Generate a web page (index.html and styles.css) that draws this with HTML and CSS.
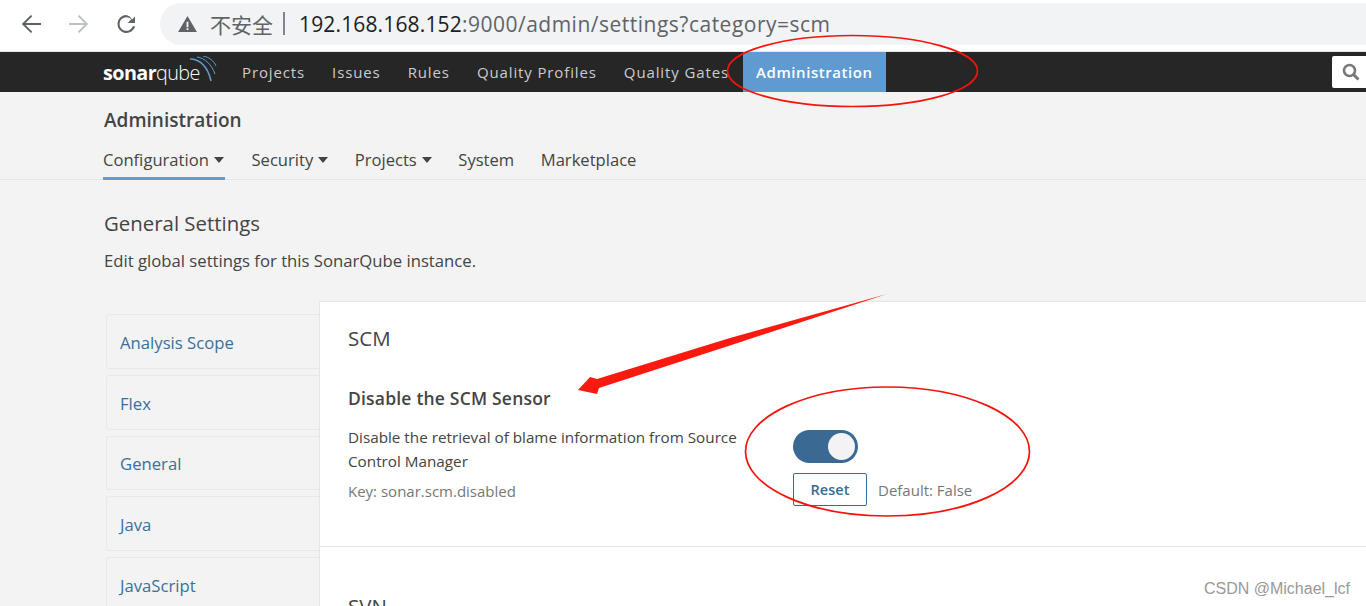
FILE: index.html
```html
<!DOCTYPE html>
<html lang="en">
  <head>
    <meta charset="UTF-8" />
    <title>General Settings</title>
    <link rel="stylesheet" href="styles.css">
  </head>
  <body>
    <div class="browser">
      <svg class="tool" viewBox="0 0 24 24"><path d="M22 11H6.6l6.7-6.7L11.9 3 2.8 12l9.1 9 1.4-1.3L6.6 13H22z" fill="#5f6368"/></svg>
      <svg class="tool tool-off" viewBox="0 0 24 24"><path d="M2 11h15.4l-6.7-6.7L12.1 3l9.1 9-9.1 9-1.4-1.3 6.7-6.7H2z" fill="#bdc1c6"/></svg>
      <svg class="tool" viewBox="0 0 24 24"><path d="M20 4.5l-2.9 2.9A8.9 8.9 0 0 0 11.5 3a9 9 0 1 0 8.7 11.2h-2.4a6.8 6.8 0 1 1-6.3-9c1.9 0 3.6.8 4.8 2L12.6 11H20z" fill="#5f6368"/></svg>
      <div class="urlbar">
        <svg class="warn" viewBox="0 0 20 17"><path d="M10 0l10 17H0z" fill="#5f6368"/><path d="M9 6h2v6H9zM9 13h2v2H9z" fill="#f1f3f4"/></svg>
        <span class="insecure">不安全</span>
        <span class="sep"></span>
        <span class="host">192.168.168.152</span><span class="path">:9000/admin/settings?category=scm</span>
      </div>
    </div>

    <nav class="navbar">
      <a class="logo"><b>sonar</b>qube
        <svg class="logo-waves" viewBox="0 0 28 26"><path d="M1 3c10 0 18 8 21 22" stroke="#5f9bd0" stroke-width="1.6" fill="none"/><path d="M8 1c8 1 15 8 18 17" stroke="#5f9bd0" stroke-width="1" fill="none"/><path d="M14 0c6 1 11 5 13 10" stroke="#5f9bd0" stroke-width="1" fill="none"/></svg>
      </a>
      <a class="nav-item">Projects</a>
      <a class="nav-item">Issues</a>
      <a class="nav-item">Rules</a>
      <a class="nav-item">Quality Profiles</a>
      <a class="nav-item">Quality Gates</a>
      <a class="nav-item active">Administration</a>
      <div class="search">
        <svg viewBox="0 0 18 18" width="18" height="18"><circle cx="7.5" cy="7.5" r="5.5" fill="none" stroke="#777" stroke-width="2.6"/><path d="M11.5 11.5l5 5" stroke="#777" stroke-width="3"/></svg>
      </div>
    </nav>

    <header class="subhead">
      <h1>Administration</h1>
      <ul class="tabs">
        <li class="tab current">Configuration<i class="caret"></i></li>
        <li class="tab">Security<i class="caret"></i></li>
        <li class="tab">Projects<i class="caret"></i></li>
        <li class="tab">System</li>
        <li class="tab">Marketplace</li>
      </ul>
    </header>

    <main class="content">
      <h2>General Settings</h2>
      <p class="lead">Edit global settings for this SonarQube instance.</p>

      <div class="layout">
        <ul class="side">
          <li>Analysis Scope</li>
          <li>Flex</li>
          <li>General</li>
          <li>Java</li>
          <li>JavaScript</li>
        </ul>

        <div class="panel">
          <section class="block">
            <h3>SCM</h3>
            <div class="setting">
              <div class="setting-info">
                <h4>Disable the SCM Sensor</h4>
                <p class="desc">Disable the retrieval of blame information from Source Control Manager</p>
                <p class="key">Key: sonar.scm.disabled</p>
              </div>
              <div class="setting-input">
                <div class="toggle"><span class="knob"></span></div>
                <div class="reset-row">
                  <button class="reset" type="button">Reset</button>
                  <span class="default">Default: False</span>
                </div>
              </div>
            </div>
          </section>
          <section class="block">
            <h3>SVN</h3>
          </section>
        </div>
      </div>
    </main>

    <!-- red marks drawn on top of the screenshot -->
    <svg class="marks" viewBox="0 0 1366 606" width="1366" height="606">
      <ellipse cx="852.5" cy="71" rx="125" ry="35.5" fill="none" stroke="#f6130c" stroke-width="1.7"/>
      <ellipse cx="887.5" cy="451.5" rx="142" ry="64.5" fill="none" stroke="#f6130c" stroke-width="1.7"/>
      <polygon points="887,294 730,338 597,379 590,377 578,390 597,394 599,388 730,345.5" fill="#fb1a10"/>
    </svg>

    <div class="watermark">CSDN @Michael_lcf</div>
  </body>
</html>
```

FILE: styles.css
```css
* {
  box-sizing: border-box;
}
html,
body {
  height: 606px;
  overflow: hidden;
}
body {
  margin: 0;
  background-color: #f3f3f3;
  color: #444;
  font-family: "Open Sans", "Noto Sans CJK SC", sans-serif;
}
h1,
h2,
h3,
h4,
p,
ul {
  margin: 0;
  padding: 0;
  font-weight: normal;
}
ul {
  list-style: none;
}

/* browser toolbar */
.browser {
  display: flex;
  align-items: center;
  height: 52px;
  padding: 3px 0 7px 19px;
  background-color: #fff;
  border-bottom: 1px solid #e8e8e8;
}
.tool {
  width: 24px;
  height: 24px;
  margin-right: 24px;
}
.urlbar {
  display: flex;
  align-items: center;
  flex: 1;
  height: 42px;
  margin-left: -3px;
  padding-left: 18px;
  background-color: #f1f3f4;
  border-radius: 21px 0 0 21px;
  font-size: 21px;
  white-space: nowrap;
}
.warn {
  width: 19px;
  height: 16px;
  margin-right: 13px;
}
.insecure {
  color: #5f6368;
  font-size: 21px;
}
.sep {
  width: 2px;
  height: 23px;
  margin: 0 14px 0 10px;
  background-color: #80868b;
}
.host {
  color: #202124;
  letter-spacing: 0.15px;
}
.path {
  color: #5f6368;
  letter-spacing: 0.5px;
}

/* top nav */
.navbar {
  display: flex;
  align-items: center;
  height: 40px;
  padding-left: 103px;
  background-color: #262626;
  color: #ccc;
  font-size: 15px;
  letter-spacing: 0.88px;
}
.logo {
  position: relative;
  flex: none;
  width: 125.5px;
  color: #fff;
  font-size: 19.8px;
  font-weight: 300;
  letter-spacing: -0.6px;
}
.logo b {
  font-weight: 700;
}
.logo-waves {
  position: absolute;
  top: -3px;
  left: 86px;
  width: 28px;
  height: 26px;
}
.nav-item {
  display: flex;
  align-items: center;
  height: 40px;
  padding: 0 13.5px;
}
.nav-item.active {
  background-color: #5f9bd0;
  color: #fff;
  font-weight: 600;
  letter-spacing: 0.57px;
}
.search {
  display: flex;
  align-items: center;
  justify-content: flex-end;
  width: 34px;
  height: 32px;
  margin-left: auto;
  padding-right: 6px;
  background-color: #fff;
  border-radius: 2px 0 0 2px;
}

/* admin header */
.subhead {
  height: 88px;
  padding: 15px 0 0 103px;
  border-bottom: 1px solid #e6e6e6;
}
.subhead h1 {
  margin-left: 1px;
  font-size: 19px;
  font-weight: 600;
  line-height: 26px;
}
.tabs {
  display: flex;
  gap: 26.5px;
  margin-top: 14px;
  font-size: 16.6px;
}
.tab {
  height: 33px;
  line-height: 26px;
}
.tab.current {
  min-width: 122px;
  border-bottom: 3px solid #5f9bd0;
}
.caret {
  display: inline-block;
  margin: 0 0 3px 5px;
  border-top: 6px solid #444;
  border-left: 5.5px solid transparent;
  border-right: 5.5px solid transparent;
}

/* page body */
.content {
  padding-top: 28px;
}
.content h2 {
  margin-left: 104px;
  font-size: 20.4px;
  line-height: 30px;
}
.lead {
  margin: 11px 0 0 104px;
  font-size: 16.7px;
  line-height: 24px;
}
.layout {
  display: flex;
  align-items: flex-start;
  margin-top: 28px;
  padding-left: 106px;
}
.side {
  flex: none;
  width: 213px;
  margin-top: 13px;
  color: #3b6f9c;
  font-size: 16.7px;
}
.side li {
  display: flex;
  align-items: center;
  height: 54.75px;
  margin-bottom: 6px;
  padding: 2px 0 0 13px;
  border: 1px solid #e8e8e8;
  border-right: none;
  border-radius: 3px 0 0 3px;
}
.panel {
  flex: 1;
  min-height: 320px;
  background-color: #fff;
  border-top: 1px solid #e6e6e6;
  border-left: 1px solid #e6e6e6;
}
.block {
  padding: 22px 28px 0;
}
.block:first-child {
  border-bottom: 1px solid #e6e6e6;
}
.block h3 {
  font-size: 20.5px;
  line-height: 28px;
}
.block + .block {
  padding-top: 45px;
}
.setting {
  display: flex;
  height: 194px;
  padding-top: 35px;
}
.setting-info {
  flex: none;
  width: 445px;
}
.setting-info h4 {
  font-size: 17.5px;
  font-weight: 600;
  letter-spacing: 0.2px;
  line-height: 22px;
}
.desc {
  width: 395px;
  margin-top: 16px;
  font-size: 15.25px;
  line-height: 24px;
}
.key {
  margin-top: 6px;
  color: #777;
  font-size: 15px;
  line-height: 24px;
}
.setting-input {
  padding-top: 43px;
}
.toggle {
  position: relative;
  width: 65px;
  height: 33px;
  background-color: #3a6a94;
  border-radius: 17px;
}
.knob {
  position: absolute;
  top: 3px;
  right: 3px;
  width: 27px;
  height: 27px;
  background-color: #f3f3f3;
  border-radius: 50%;
}
.reset-row {
  display: flex;
  align-items: center;
  gap: 11px;
  margin-top: 10px;
}
.reset {
  width: 74px;
  height: 33px;
  padding: 0;
  background-color: #fff;
  color: #3a6a94;
  border: 1px solid #3a6a94;
  border-radius: 2px;
  font-family: inherit;
  font-size: 14.5px;
  font-weight: 600;
}
.default {
  color: #777;
  font-size: 15px;
}

/* overlays */
.marks {
  position: absolute;
  top: 0;
  left: 0;
  pointer-events: none;
}
.watermark {
  position: absolute;
  right: 16px;
  bottom: 8px;
  color: #999;
  font-family: "Liberation Sans", sans-serif;
  font-size: 16px;
}
```
